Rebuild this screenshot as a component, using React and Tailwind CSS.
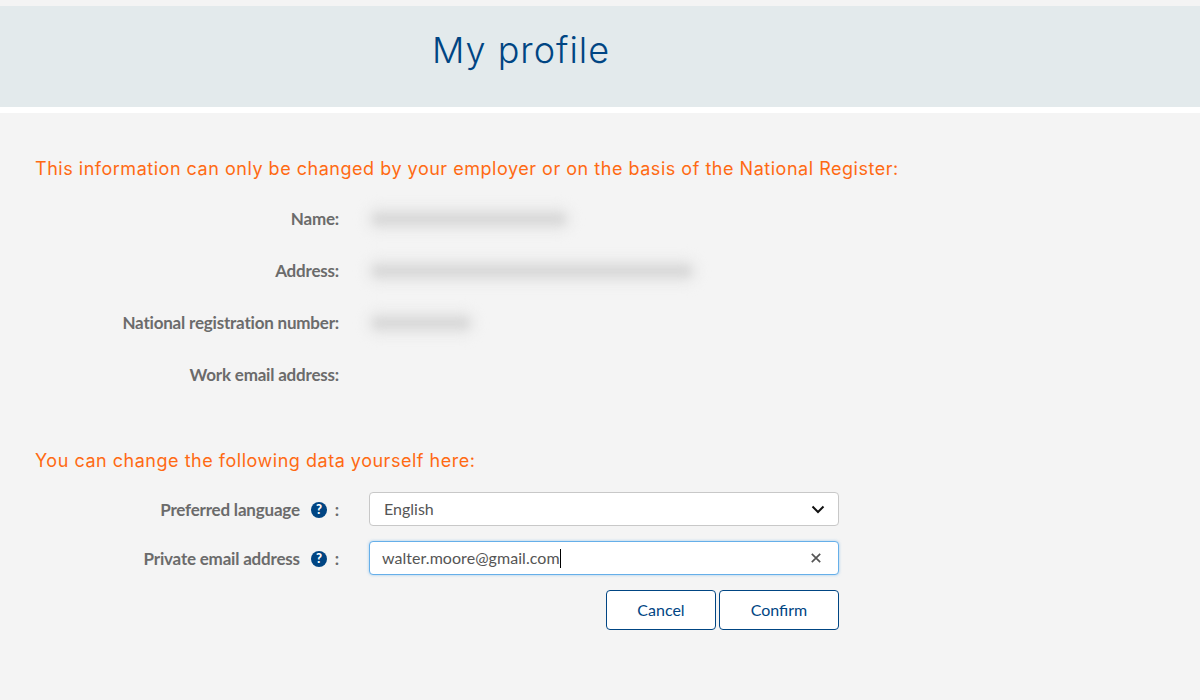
import React from "react";

const lato = "font-['Lato','Liberation_Sans',sans-serif]";
const head = "font-['Inter','Noto_Sans',sans-serif]";

function Blur({ w }) {
  return (
    <div className="mt-[2px] h-[12px] rounded-[6px] bg-[#d9d9d9] shadow-[0_0_9px_6px_rgba(222,222,222,0.6)] blur-[4px]" style={{ width: w }} />
  );
}

function Row({ label, children }) {
  return (
    <div className="flex h-[52px] items-center">
      <div className="w-[339px] shrink-0 pt-[1px] text-right text-[17px] font-bold tracking-[-0.2px] text-[#6b6b6b]">{label}</div>
      <div className="ml-[34px]">{children}</div>
    </div>
  );
}

function Help() {
  return (
    <span className="ml-[11px] mr-[8px] flex h-[16px] w-[16px] items-center justify-center rounded-full bg-[#004583] text-[13px] font-black leading-none text-white">?</span>
  );
}

export default function App() {
  return (
    <div className={`h-[700px] w-[1200px] overflow-hidden bg-[#f4f4f4] pt-[6px] ${lato}`}>
      <div className={`flex h-[101px] items-center bg-[#e3eaec] pb-[13px] pl-[432px] text-[36px] font-light tracking-[1px] text-[#004583] ${head}`}>My profile</div>
      <div className="h-[6px] bg-white" />
      <div className={`pl-[35px] pt-[44px] text-[18px] leading-[24px] tracking-[0.52px] text-[#ff6a13] ${head}`}>
        This information can only be changed by your employer or on the basis of the National Register:
      </div>
      <div className="mt-[11px]">
        <Row label="Name:"><Blur w={192} /></Row>
        <Row label="Address:"><Blur w={318} /></Row>
        <Row label="National registration number:"><Blur w={96} /></Row>
        <Row label="Work email address:" />
      </div>
      <div className={`pl-[35px] pt-[49px] text-[18px] leading-[24px] tracking-[0.52px] text-[#ff6a13] ${head}`}>You can change the following data yourself here:</div>
      <div className="mt-[19px] flex h-[34px] items-center">
        <div className="flex w-[339px] shrink-0 items-center justify-end pt-[1px] text-[17px] font-bold tracking-[-0.2px] text-[#6b6b6b]">
          Preferred language<Help />:
        </div>
        <div className="ml-[30px] flex h-[34px] w-[470px] items-center justify-between rounded-[4px] border border-[#c8c8c8] bg-white pl-[14px] pr-[13px] text-[16px] text-[#555]">
          English
          <svg width="14" height="9" viewBox="0 0 14 9" fill="none"><path d="M1.5 1.5 7 7l5.5-5.5" stroke="#111" strokeWidth="2" /></svg>
        </div>
      </div>
      <div className="mt-[15px] flex h-[34px] items-center">
        <div className="flex w-[339px] shrink-0 items-center justify-end pt-[1px] text-[17px] font-bold tracking-[-0.2px] text-[#6b6b6b]">
          Private email address<Help />:
        </div>
        <div className="ml-[30px] flex h-[34px] w-[470px] items-center justify-between rounded-[4px] border border-[#66afe9] bg-white pl-[12px] pr-[17px] text-[16px] tracking-[0.05px] text-[#555] shadow-[0_0_3px_rgba(102,175,233,0.6)]">
          <span className="flex items-center">walter.moore@gmail.com<span className="h-[19px] w-px bg-black" /></span>
          <svg width="10" height="10" viewBox="0 0 10 10" fill="none"><path d="M.8.8l8.4 8.4M9.2.8.8 9.2" stroke="#555" strokeWidth="1.7" /></svg>
        </div>
      </div>
      <div className="ml-[606px] mt-[15px] flex w-[233px] gap-[3px]">
        <button className="h-[40px] w-[110px] rounded-[4px] border border-[#004583] bg-white text-[16px] text-[#004583]">Cancel</button>
        <button className="h-[40px] w-[120px] rounded-[4px] border border-[#004583] bg-white text-[16px] text-[#004583]">Confirm</button>
      </div>
    </div>
  );
}
